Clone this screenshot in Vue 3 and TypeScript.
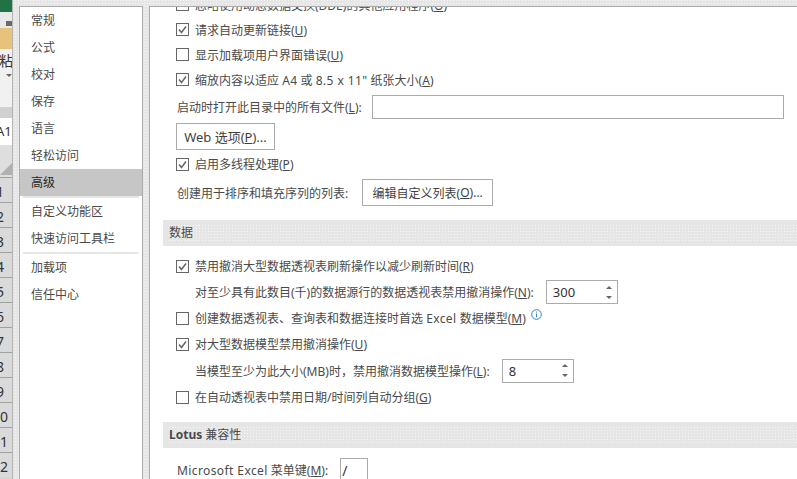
<script setup lang="ts">
const navTop = ['常规', '公式', '校对', '保存', '语言', '轻松访问']
const navMid = ['自定义功能区', '快速访问工具栏']
const navEnd = ['加载项', '信任中心']
const rowNumbers = [1, 2, 3, 4, 5, 6, 7, 8, 9, 10, 11, 12]
</script>

<template>
  <div class="dialog">
    <div class="sheet">
      <div class="sheet__title"></div>
      <div class="sheet__tabs"><span class="sheet__icon"></span></div>
      <div class="sheet__paste"></div>
      <div class="sheet__ribbon">
        <span class="sheet__paste-label">粘</span>
        <span class="sheet__caret"></span>
      </div>
      <div class="sheet__band"></div>
      <div class="sheet__name">A1</div>
      <div class="sheet__corner"><span class="sheet__triangle"></span></div>
      <div v-for="n in rowNumbers" :key="n" class="sheet__row">{{ n }}</div>
    </div>

    <nav class="nav">
      <div v-for="item in navTop" :key="item" class="nav__item">{{ item }}</div>
      <div class="nav__item nav__item--active">高级</div>
      <div class="nav__rule"></div>
      <div v-for="item in navMid" :key="item" class="nav__item">{{ item }}</div>
      <div class="nav__rule"></div>
      <div v-for="item in navEnd" :key="item" class="nav__item">{{ item }}</div>
    </nav>

    <main class="panel">
      <div class="content">
        <div class="row">
          <span class="check"></span>
          <span>忽略使用动态数据交换(DDE)的其他应用程序(<u>O</u>)</span>
        </div>
        <div class="row">
          <span class="check"><svg viewBox="0 0 11 11"><path d="M2 5.5l2.5 3L9 2.5" /></svg></span>
          <span>请求自动更新链接(<u>U</u>)</span>
        </div>
        <div class="row">
          <span class="check"></span>
          <span>显示加载项用户界面错误(<u>U</u>)</span>
        </div>
        <div class="row">
          <span class="check"><svg viewBox="0 0 11 11"><path d="M2 5.5l2.5 3L9 2.5" /></svg></span>
          <span>缩放内容以适应 <span class="latin">A4</span> 或 <span class="latin">8.5 x 11"</span> 纸张大小(<u>A</u>)</span>
        </div>

        <div class="file-row">
          <span class="plain">启动时打开此目录中的所有文件(<u>L</u>):</span>
          <span class="field field--grow"></span>
        </div>
        <div class="button-row">
          <span class="btn btn--web">Web 选项(<u>P</u>)...</span>
        </div>
        <div class="row row--thread">
          <span class="check"><svg viewBox="0 0 11 11"><path d="M2 5.5l2.5 3L9 2.5" /></svg></span>
          <span>启用多线程处理(<u>P</u>)</span>
        </div>
        <div class="list-row">
          <span class="plain">创建用于排序和填充序列的列表:</span>
          <span class="btn btn--list">编辑自定义列表(<u>O</u>)...</span>
        </div>

        <div class="section section--data">数据</div>

        <div class="row row--tall">
          <span class="check"><svg viewBox="0 0 11 11"><path d="M2 5.5l2.5 3L9 2.5" /></svg></span>
          <span>禁用撤消大型数据透视表刷新操作以减少刷新时间(<u>R</u>)</span>
        </div>
        <div class="row row--tall row--indent">
          <span class="indent-label">对至少具有此数目(千)的数据源行的数据透视表禁用撤消操作(<u>N</u>):</span>
          <span class="field spinner">
            <span>300</span>
            <span class="arrows"><i class="up"></i><i class="down"></i></span>
          </span>
        </div>
        <div class="row row--tall">
          <span class="check"></span>
          <span>创建数据透视表、查询表和数据连接时首选 <span class="latin">Excel</span> 数据模型(<u>M</u>)</span>
          <svg class="info" viewBox="0 0 11 11">
            <circle cx="5.5" cy="5.5" r="4.8" />
            <path d="M5.5 4.6v3.6M5.5 2.6v1" />
          </svg>
        </div>
        <div class="row row--tall">
          <span class="check"><svg viewBox="0 0 11 11"><path d="M2 5.5l2.5 3L9 2.5" /></svg></span>
          <span>对大型数据模型禁用撤消操作(<u>U</u>)</span>
        </div>
        <div class="row row--model row--indent">
          <span class="indent-label">当模型至少为此大小(MB)时，禁用撤消数据模型操作(<u>L</u>):</span>
          <span class="field spinner">
            <span>8</span>
            <span class="arrows"><i class="up"></i><i class="down"></i></span>
          </span>
        </div>
        <div class="row row--tall">
          <span class="check"></span>
          <span>在自动透视表中禁用日期/时间列自动分组(<u>G</u>)</span>
        </div>

        <div class="section section--lotus"><b>Lotus</b> 兼容性</div>

        <div class="menu-row">
          <span class="plain"><span class="latin">Microsoft Excel</span> 菜单键(<u>M</u>):</span>
          <span class="field field--key">/</span>
        </div>
      </div>
    </main>
  </div>
</template>

<style>
html,
body {
  margin: 0;
  overflow: hidden;
  background: #e6e6e6;
}
</style>

<style scoped>
.dialog {
  display: flex;
  width: 797px;
  height: 479px;
  overflow: hidden;
  padding-top: 6px;
  box-sizing: border-box;
  background-color: #e6e6e6;
  background-image: conic-gradient(at 1px 1px, transparent 75%, #f6f6f6 0);
  background-size: 3px 3px;
  font-family: "Noto Sans", "Noto Sans CJK SC", sans-serif;
  font-size: 12px;
  color: #4a4a4a;
}

.latin {
  letter-spacing: 0.4px;
}

.sheet {
  display: flex;
  flex-direction: column;
  flex: none;
  width: 13px;
  height: 479px;
  margin-top: -6px;
  overflow: hidden;
  background: #d6d6d6;
  border-right: 1px solid #b4b4b4;
  box-sizing: border-box;
}
.sheet__title {
  flex: none;
  height: 12px;
  background: #217346;
}
.sheet__tabs {
  display: flex;
  flex: none;
  justify-content: flex-end;
  align-items: flex-end;
  height: 16px;
  background: #e9e9e9;
}
.sheet__icon {
  width: 6px;
  height: 5px;
  margin-bottom: 2px;
  background: #6a6a6a;
}
.sheet__paste {
  flex: none;
  height: 21px;
  background: #e8c27a;
}
.sheet__ribbon {
  display: flex;
  flex: none;
  flex-direction: column;
  height: 58px;
  background: #f1f1f1;
}
.sheet__paste-label {
  margin: 2px 0 0 -1px;
  font-size: 14px;
  line-height: 20px;
  color: #333;
}
.sheet__caret {
  align-self: flex-end;
  margin-top: 3px;
  border: 3px solid transparent;
  border-top-color: #666;
  border-bottom-width: 0;
}
.sheet__band {
  flex: none;
  height: 11px;
  background: #d0d0d0;
}
.sheet__name {
  flex: none;
  height: 27px;
  margin-left: -4px;
  background: #fff;
  font-size: 13px;
  line-height: 27px;
  color: #333;
}
.sheet__corner {
  display: flex;
  flex: none;
  align-items: flex-end;
  height: 32px;
  background: #dedede;
}
.sheet__triangle {
  width: 0;
  height: 0;
  margin-bottom: 2px;
  border-right: 12px solid #b0b0b0;
  border-top: 12px solid transparent;
}
.sheet__row {
  flex: none;
  width: 26px;
  height: 25px;
  margin-left: -13px;
  box-sizing: border-box;
  border-top: 1px solid #a0a0a0;
  background: #dadada;
  text-align: center;
  font-size: 14px;
  line-height: 28px;
  color: #333;
}

.nav {
  flex: none;
  width: 124px;
  height: 500px;
  margin-left: 6px;
  box-sizing: border-box;
  background: #fff;
  border: 1px solid #ababab;
  border-bottom: none;
}
.nav__item {
  height: 27px;
  padding-left: 11px;
  line-height: 28px;
  color: #4a4a4a;
}
.nav__item--active {
  background: #c6c6c6;
  color: #262626;
}
.nav__rule {
  height: 2px;
  margin: 0 3px;
  background: #e6e6e6;
}

.panel {
  flex: none;
  width: 648px;
  height: 500px;
  margin-left: 6px;
  overflow: hidden;
  box-sizing: border-box;
  background: #fff;
  border: 1px solid #ababab;
  border-width: 1px 0 0 1px;
}
.content {
  margin-top: -15px;
  padding: 0 13px;
}

.row {
  display: flex;
  align-items: center;
  gap: 6px;
  height: 25px;
  padding-left: 13px;
}
.row--thread {
  height: 24px;
  margin-top: 2px;
}
.row--tall {
  height: 26px;
}
.row--model {
  height: 27px;
}
.row--indent {
  gap: 12px;
  padding-left: 32px;
}
.check {
  display: flex;
  flex: none;
  width: 13px;
  height: 13px;
  box-sizing: border-box;
  background: #fff;
  border: 1px solid #666;
}
.check svg {
  width: 11px;
  height: 11px;
  fill: none;
  stroke: #666;
  stroke-width: 1.5;
}
.info {
  flex: none;
  width: 11px;
  height: 11px;
  margin: -7px 0 0 -1px;
  fill: none;
  stroke: #2f7fc4;
  stroke-width: 1;
}
.row--indent .spinner {
  flex: none;
}

.plain {
  flex: none;
}
.file-row,
.list-row,
.menu-row {
  display: flex;
  align-items: center;
  padding-left: 14px;
}
.file-row {
  gap: 10px;
  margin-top: 3px;
}
.button-row {
  display: flex;
  margin-top: 4px;
  padding-left: 13px;
}
.list-row {
  gap: 14px;
  margin-top: 3px;
}
.menu-row {
  gap: 12px;
  margin-top: 10px;
}

.btn {
  display: flex;
  align-items: center;
  justify-content: center;
  flex: none;
  height: 27px;
  box-sizing: border-box;
  background: #fff;
  border: 1px solid #ababab;
  color: #3f3f3f;
}
.btn--web {
  width: 99px;
  font-size: 13px;
}
.btn--list {
  width: 131px;
}

.field {
  display: flex;
  align-items: center;
  height: 24px;
  box-sizing: border-box;
  background: #fff;
  border: 1px solid #ababab;
}
.field--grow {
  flex: 1;
}
.field--key {
  flex: none;
  width: 28px;
  padding-left: 1px;
  font-size: 14px;
  color: #333;
}
.spinner {
  justify-content: space-between;
  width: 72px;
  padding: 0 5px 0 6px;
  font-size: 13px;
  color: #333;
}
.arrows {
  display: flex;
  flex-direction: column;
  gap: 7px;
}
.up,
.down {
  display: block;
  border: 3px solid transparent;
  border-top-width: 0;
  border-bottom-color: #666;
}
.down {
  border-top: 3px solid #666;
  border-bottom: 0;
}

.section {
  height: 26px;
  margin-right: -13px;
  box-sizing: border-box;
  padding: 5px 0 5px 6px;
  background:
    conic-gradient(at 1px 1px, transparent 75%, #f6f6f6 0) 0 0 / 3px 3px content-box,
    #e6e6e6;
  font-size: 12px;
  line-height: 16px;
  color: #4a4a4a;
}
.section--data {
  margin-top: 14px;
  margin-bottom: 7px;
}
.section--lotus {
  margin-top: 12px;
}
</style>
